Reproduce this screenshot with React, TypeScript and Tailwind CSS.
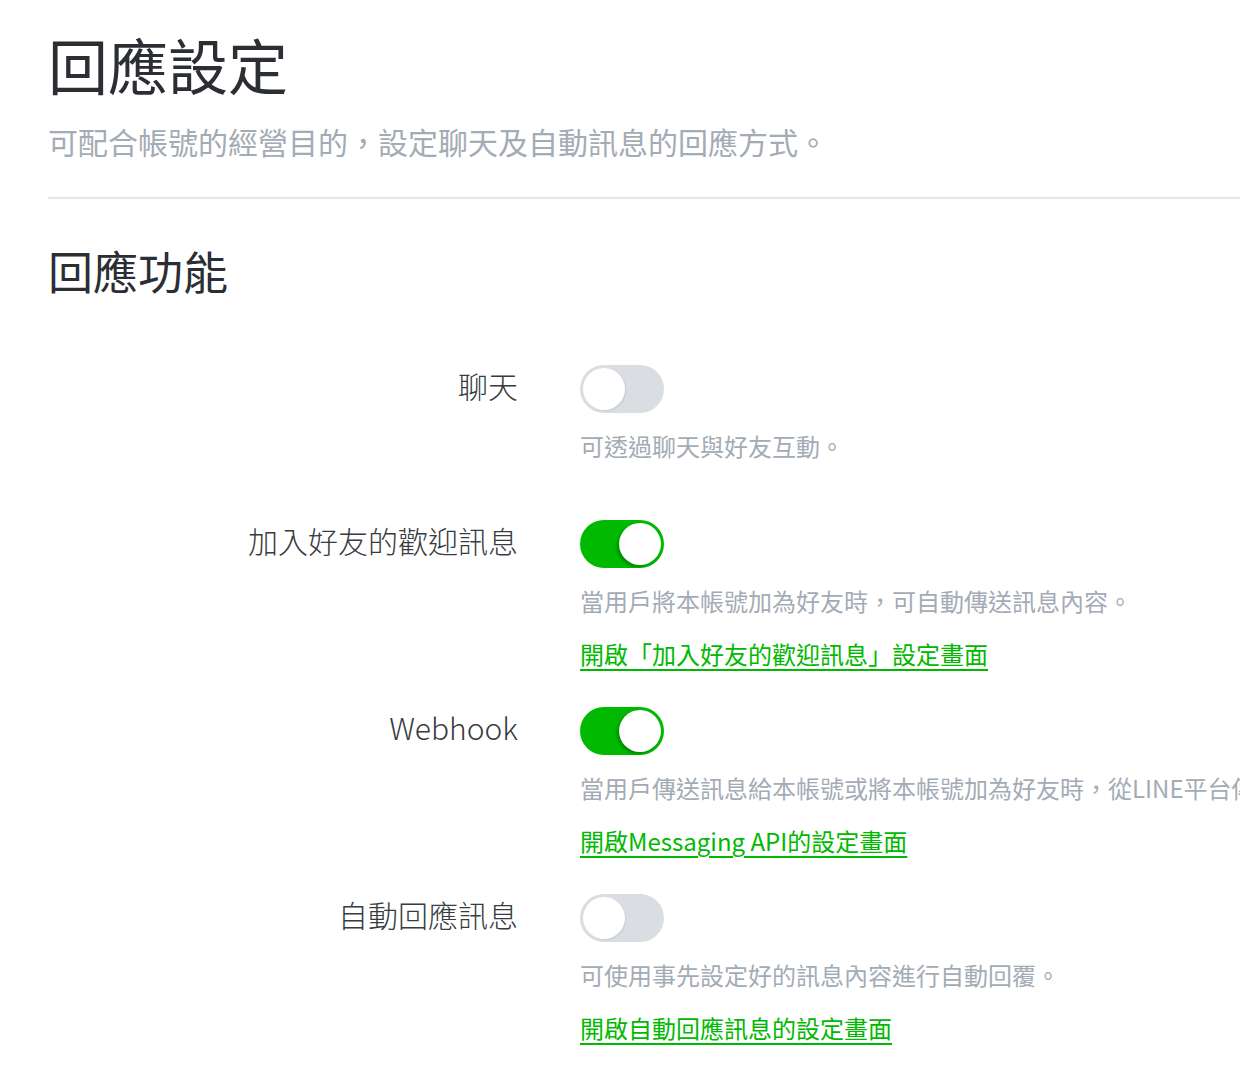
import React, { useState } from 'react';

const FONT = { fontFamily: '"Noto Sans CJK TC", "Noto Sans", sans-serif' };

interface ToggleProps {
  on: boolean;
  onChange: () => void;
}

const Toggle: React.FC<ToggleProps> = ({ on, onChange }) => (
  <button
    type="button"
    onClick={onChange}
    className={`relative block w-[84px] h-[48px] rounded-full transition-colors ${on ? 'bg-[#00b900]' : 'bg-[#dadee3]'}`}
  >
    <span
      className={`absolute top-[3px] w-[42px] h-[42px] rounded-full bg-white transition-all ${on ? 'left-[39px] shadow-[-2px_2px_3px_rgba(0,0,0,0.25)]' : 'left-[3px] shadow-[1px_1px_2px_rgba(0,0,0,0.08)]'}`}
    />
  </button>
);

interface Row {
  label: string;
  desc: string;
  link?: string;
  initial: boolean;
}

const rows: Row[] = [
  { label: '聊天', desc: '可透過聊天與好友互動。', initial: false },
  {
    label: '加入好友的歡迎訊息',
    desc: '當用戶將本帳號加為好友時，可自動傳送訊息內容。',
    link: '開啟「加入好友的歡迎訊息」設定畫面',
    initial: true,
  },
  {
    label: 'Webhook',
    desc: '當用戶傳送訊息給本帳號或將本帳號加為好友時，從LINE平台傳送通知至Webhook URL。',
    link: '開啟Messaging API的設定畫面',
    initial: true,
  },
  {
    label: '自動回應訊息',
    desc: '可使用事先設定好的訊息內容進行自動回覆。',
    link: '開啟自動回應訊息的設定畫面',
    initial: false,
  },
];

export default function App() {
  const [states, setStates] = useState(rows.map((r) => r.initial));

  return (
    <div className="w-[1240px] h-[1066px] overflow-hidden bg-white" style={FONT}>
      <div className="w-[1400px] pl-[48px] pt-[28px]">
        <h1 className="text-[60px] leading-[72px] text-[#2b2e33] font-normal">回應設定</h1>
        <p className="mt-[21px] text-[30px] leading-[40px] text-[#a3abb5]">
          可配合帳號的經營目的，設定聊天及自動訊息的回應方式。
        </p>
        <div className="mt-[36px] h-[2px] bg-[#e6e7e9]" />

        <h2 className="mt-[44px] text-[45px] leading-[56px] text-[#2b2e33] font-normal">回應功能</h2>

        <div className="mt-[66px] flex flex-col">
          {rows.map((row, i) => (
            <div key={row.label} className={`flex ${row.link ? 'pb-[39px]' : 'pb-[60px]'}`}>
              <div className="w-[470px] shrink-0 text-right text-[30px] leading-[40px] font-light text-[#383b40]">
                {row.label}
              </div>
              <div className="ml-[62px] flex flex-col">
                <Toggle
                  on={states[i]}
                  onChange={() => setStates(states.map((s, j) => (j === i ? !s : s)))}
                />
                <p className="mt-[19px] text-[24px] leading-[28px] text-[#a3abb5] whitespace-nowrap">
                  {row.desc}
                </p>
                {row.link && (
                  <a
                    href="#"
                    className="mt-[25px] text-[24px] leading-[28px] text-[#00b900] underline underline-offset-[5px] decoration-2 whitespace-nowrap"
                  >
                    {row.link}
                  </a>
                )}
              </div>
            </div>
          ))}
        </div>
      </div>
    </div>
  );
}
